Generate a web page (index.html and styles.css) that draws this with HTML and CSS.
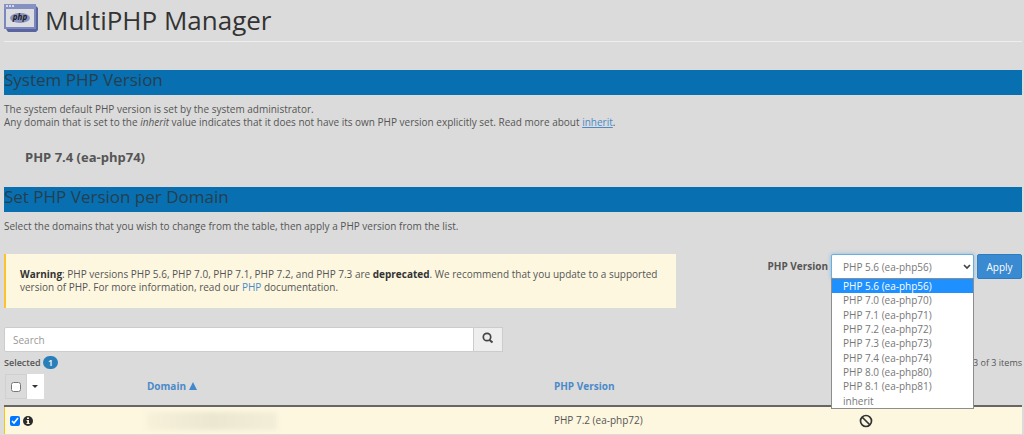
FILE: index.html
```html
<!DOCTYPE html>
<html lang="en">

<head>
  <title>MultiPHP Manager</title>
  <meta charset="utf-8">
  <meta name="viewport" content="width=device-width, initial-scale=1">
  <link rel="stylesheet" href="styles.css">
</head>

<body>

  <header class="page-header">
    <svg class="page-icon" width="36" height="32" viewBox="0 0 36 32" aria-hidden="true">
      <path d="M3 3h29l2 2v22l-2 2H4l-2-3z" fill="#5a659f"/>
      <rect x="1" y="2" width="30" height="23" fill="#dcdde0" stroke="#7c88bd" stroke-width="2"/>
      <rect x="0" y="1" width="32" height="5" fill="#8590c3"/>
      <path d="M2 2h2v2H2zM5 2h2v2H5zM8 2h2v2H8z" fill="#d5d8e8"/>
      <ellipse cx="16" cy="15" rx="10" ry="5" fill="#8891c1"/>
      <text class="php-mark" x="16" y="17" text-anchor="middle">php</text>
    </svg>
    <h1>MultiPHP Manager</h1>
  </header>

  <section>
    <h2>System PHP Version</h2>
    <p>The system default PHP version is set by the system administrator.<br>
      Any domain that is set to the <em>inherit</em> value indicates that it does not have its own PHP version explicitly set. Read more about <a class="underlined" href="#">inherit</a>.</p>
    <div class="system-version">PHP 7.4 (ea-php74)</div>
  </section>

  <section>
    <h2>Set PHP Version per Domain</h2>
    <p>Select the domains that you wish to change from the table, then apply a PHP version from the list.</p>

    <div class="controls">
      <div class="warning">
        <strong>Warning</strong>: PHP versions PHP 5.6, PHP 7.0, PHP 7.1, PHP 7.2, and PHP 7.3 are <strong>deprecated</strong>. We recommend that you update to a supported version of PHP. For more information, read our <a href="#">PHP</a> documentation.
      </div>
      <form class="apply-form">
        <label for="phpVersion">PHP Version</label>
        <div class="version-picker">
          <select id="phpVersion">
            <option>PHP 5.6 (ea-php56)</option>
            <option>PHP 7.0 (ea-php70)</option>
            <option>PHP 7.1 (ea-php71)</option>
            <option>PHP 7.2 (ea-php72)</option>
            <option>PHP 7.3 (ea-php73)</option>
            <option>PHP 7.4 (ea-php74)</option>
            <option>PHP 8.0 (ea-php80)</option>
            <option>PHP 8.1 (ea-php81)</option>
            <option>inherit</option>
          </select>
          <svg class="chevron" width="8" height="6" viewBox="0 0 8 6" aria-hidden="true">
            <path d="M1 1l3 3 3-3" fill="none" stroke="#444" stroke-width="1.700"/>
          </svg>
          <ul class="version-list" role="listbox" aria-label="PHP Version">
            <li class="active" role="option" aria-selected="true">PHP 5.6 (ea-php56)</li>
            <li role="option">PHP 7.0 (ea-php70)</li>
            <li role="option">PHP 7.1 (ea-php71)</li>
            <li role="option">PHP 7.2 (ea-php72)</li>
            <li role="option">PHP 7.3 (ea-php73)</li>
            <li role="option">PHP 7.4 (ea-php74)</li>
            <li role="option">PHP 8.0 (ea-php80)</li>
            <li role="option">PHP 8.1 (ea-php81)</li>
            <li role="option">inherit</li>
          </ul>
        </div>
        <button class="btn-apply" type="button">Apply</button>
      </form>
    </div>

    <form class="search">
      <input type="text" placeholder="Search" aria-label="Search">
      <button type="button" aria-label="Search">
        <svg width="12" height="12" viewBox="0 0 12 12" aria-hidden="true">
          <circle cx="5" cy="5" r="3.700" fill="none" stroke="#444" stroke-width="1.700"/>
          <path d="M7.500 8l3 2.500" fill="none" stroke="#444" stroke-width="2"/>
        </svg>
      </button>
    </form>

    <div class="table-info">
      <span class="selected">Selected <span class="badge">1</span></span>
      <span>3 of 3 items</span>
    </div>

    <table>
      <thead>
        <tr>
          <th class="col-select">
            <div class="select-all">
              <span><input type="checkbox" aria-label="Select all"></span>
              <button type="button" aria-label="Selection options"></button>
            </div>
          </th>
          <th class="col-domain">
            <a href="#">Domain
              <svg width="8" height="8" viewBox="0 0 8 8" aria-hidden="true">
                <path d="M4 0l4 8H0z" fill="#4189cb"/>
              </svg>
            </a>
          </th>
          <th class="col-version"><a href="#">PHP Version</a></th>
          <th class="col-fpm"></th>
        </tr>
      </thead>
      <tbody>
        <tr>
          <td>
            <div class="row-select">
              <input type="checkbox" aria-label="Select domain" checked>
              <svg width="10" height="10" viewBox="0 0 10 10" aria-hidden="true">
                <circle cx="5" cy="5" r="5" fill="#2b2b2b"/>
                <path d="M4 1.500h2v1.500H4zM3.500 4H6v3h.7v1H3.500V7h.7V5h-.7z" fill="#fdf7e0"/>
              </svg>
            </div>
          </td>
          <td><div class="hidden-domain"></div></td>
          <td>PHP 7.2 (ea-php72)</td>
          <td>
            <svg class="ban" width="14" height="14" viewBox="0 0 14 14" aria-label="Disabled">
              <circle cx="7" cy="7" r="5.500" fill="none" stroke="#333" stroke-width="1.700"/>
              <path d="M3 3l8 8" stroke="#333" stroke-width="1.700"/>
            </svg>
          </td>
        </tr>
      </tbody>
    </table>
  </section>

</body>

</html>
```

FILE: styles.css
```css
* {
  box-sizing: border-box;
}

body {
  margin: 0;
  padding: 3px 2px 0 4px;
  background-color: #dbdbdb;
  color: #555;
  font-family: "Open Sans", "Noto Sans", sans-serif;
  font-size: 10px;
  line-height: 13px;
}

a {
  color: #4a8ac9;
  text-decoration: none;
}

a.underlined {
  text-decoration: underline;
}

input,
select,
button {
  margin: 0;
  font-family: inherit;
  font-size: inherit;
}

/* Page title */
.page-header {
  display: flex;
  height: 39px;
  margin-bottom: 28px;
  border-bottom: 1px solid #eeeeee;
}

.page-icon {
  margin-right: 5px;
}

.php-mark {
  font-size: 8px;
  font-style: italic;
  font-weight: bold;
  fill: #222;
}

h1 {
  margin: 0;
  color: #333;
  font-size: 26px;
  font-weight: normal;
  line-height: 34px;
}

/* Section titles */
h2 {
  height: 25px;
  margin: 0;
  background-color: #086fb1;
  color: #263f4e;
  font-size: 17px;
  font-weight: normal;
  line-height: 20px;
}

p {
  margin: 0;
  padding: 8px 0;
}

.system-version {
  padding: 12px 21px 21px;
  font-size: 13px;
  font-weight: bold;
  line-height: 17px;
}

/* Warning and version form */
.controls {
  display: flex;
  justify-content: space-between;
  align-items: flex-start;
  margin-top: 13px;
}

.warning {
  width: 66%;
  padding: 14px;
  border-left: 2px solid #fbc32f;
  background-color: #fdf7e0;
}

.warning strong {
  color: #333;
}

.apply-form {
  display: flex;
  align-items: flex-start;
}

.apply-form label {
  padding: 6px 3px 0 0;
  font-weight: bold;
}

.version-picker {
  position: relative;
  width: 143px;
  margin-right: 3px;
}

.version-picker select {
  display: block;
  width: 100%;
  height: 25px;
  padding: 0 11px;
  appearance: none;
  border: 1px solid #68aee0;
  border-radius: 2px;
  box-shadow: 0 0 4px #8ebbdc;
  background-color: #fff;
  color: #777;
}

.chevron {
  position: absolute;
  top: 10px;
  right: 3px;
}

.version-list {
  display: grid;
  position: absolute;
  top: 24px;
  left: 0;
  z-index: 1;
  width: 100%;
  height: 131px;
  margin: 0;
  padding: 0;
  list-style: none;
  border: 1px solid #8d8d8d;
  background-color: #fff;
  color: #777;
}

.version-list li {
  padding-left: 11px;
  line-height: 14px;
}

.version-list .active {
  background-color: #1e90ff;
  color: #fff;
}

.btn-apply {
  width: 45px;
  height: 25px;
  padding: 0;
  border: 1px solid #2d7cc0;
  border-radius: 2px;
  background-color: #3a8ad1;
  color: #fff;
}

/* Search box */
.search {
  display: flex;
  width: 49%;
  margin-top: 19px;
}

.search input {
  flex: 1;
  height: 25px;
  padding: 0 8px;
  border: 1px solid #ccc;
  border-radius: 2px 0 0 2px;
}

.search input::placeholder {
  color: #999;
}

.search button {
  width: 29px;
  padding: 0;
  border: 1px solid #ccc;
  border-left: none;
  background-color: #eee;
}

.table-info {
  display: flex;
  justify-content: space-between;
  padding: 4px 0;
  font-size: 9px;
}

.selected {
  font-weight: 600;
}

.badge {
  display: inline-block;
  padding: 0 5px;
  border-radius: 7px;
  background-color: #2b7fb9;
  color: #fff;
}

/* Domains table */
table {
  width: 100%;
  margin-top: 1px;
  table-layout: fixed;
  border-collapse: collapse;
}

th,
td {
  padding: 0;
  text-align: left;
}

th {
  height: 32px;
  padding-bottom: 6px;
}

.col-select {
  width: 14%;
}

.col-domain {
  width: 40%;
}

.col-version {
  width: 30%;
}

.select-all {
  display: flex;
}

.select-all span {
  display: flex;
  align-items: center;
  justify-content: center;
  width: 22px;
  height: 25px;
  border: 1px solid #d0d0d0;
}

input[type="checkbox"] {
  width: 10px;
  height: 10px;
}

.select-all button {
  display: flex;
  align-items: center;
  justify-content: center;
  width: 17px;
  padding: 0;
  border: none;
  background-color: #fff;
}

.select-all button::before {
  content: "";
  border: 3px solid transparent;
  border-top-color: #333;
  border-bottom: none;
}

tbody tr {
  height: 28px;
  border-top: 2px solid #666;
  background-color: #fdf7e0;
}

tbody td:first-child {
  border-left: 1px solid #f5c518;
}

.row-select {
  display: flex;
  align-items: center;
  padding-left: 5px;
  gap: 3px;
}

.hidden-domain {
  width: 130px;
  height: 18px;
  background: linear-gradient(90deg, #f7f1da, #ebe7d0, #f3eed7);
  filter: blur(2px);
}

.ban {
  display: block;
}
```
